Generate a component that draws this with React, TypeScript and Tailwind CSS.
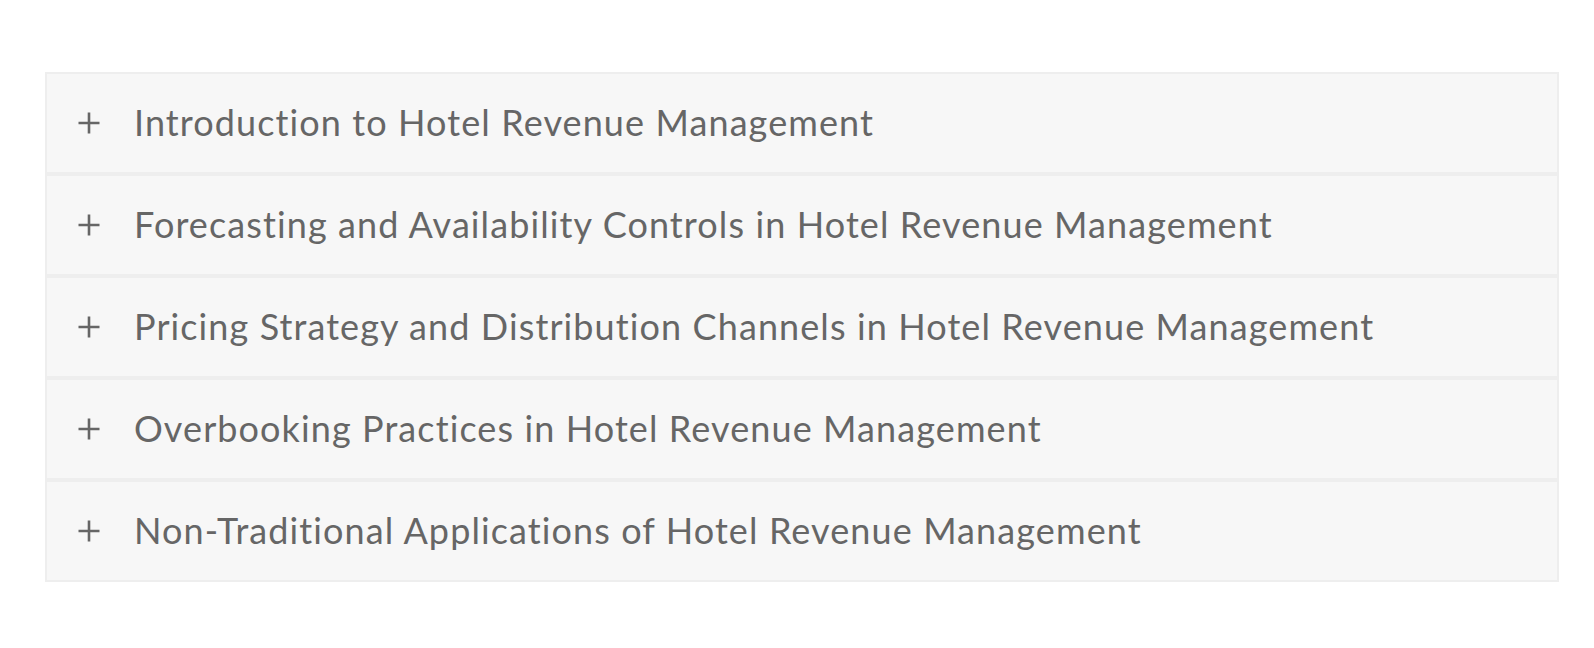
import React from 'react'

const topics = [
  'Introduction to Hotel Revenue Management',
  'Forecasting and Availability Controls in Hotel Revenue Management',
  'Pricing Strategy and Distribution Channels in Hotel Revenue Management',
  'Overbooking Practices in Hotel Revenue Management',
  'Non-Traditional Applications of Hotel Revenue Management',
]

function PlusIcon() {
  return (
    <svg width="24" height="24" viewBox="0 0 24 24" className="shrink-0">
      <path d="M12 1.5v21M1.5 12h21" stroke="#666666" strokeWidth="2.6" fill="none" />
    </svg>
  )
}

export default function App() {
  return (
    <div className="min-h-screen bg-white pt-[72px] pl-[45px] pr-[35px]" style={{ fontFamily: 'Lato, "Open Sans", sans-serif' }}>
      <div className="flex flex-col">
        {topics.map((t) => (
          <div
            key={t}
            className="flex h-[102px] items-center border-2 border-[#eeeeee] bg-[#f7f7f7] pl-[30px]"
          >
            <PlusIcon />
            <span className="mb-[2px] ml-[33px] text-[36px] leading-none tracking-[1.1px] text-[#666666] [font-variant-ligatures:none]">{t}</span>
          </div>
        ))}
      </div>
    </div>
  )
}
